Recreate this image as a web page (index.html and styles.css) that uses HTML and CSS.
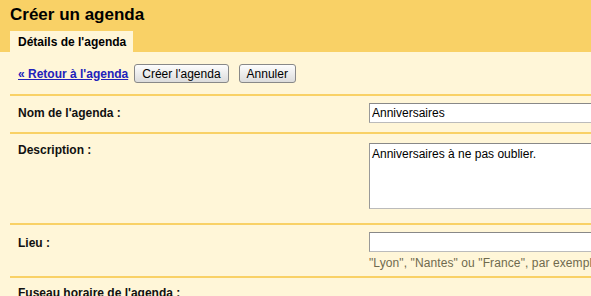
FILE: index.html
```html
<!DOCTYPE html>
<html lang="fr">
<head>
    <meta charset="UTF-8">
    <title>Créer un agenda</title>
    <link rel="stylesheet" href="styles.css">
</head>
<body>
    <div class="entete">
        <h1>Créer un agenda</h1>
        <div class="onglets">
            <span class="onglet">Détails de l'agenda</span>
        </div>
    </div>

    <div class="contenu">
        <div class="actions">
            <a href="#" class="retour">« Retour à l'agenda</a>
            <button class="bouton">Créer l'agenda</button>
            <button class="bouton annuler">Annuler</button>
        </div>

        <table class="formulaire">
            <tr class="ligne-nom">
                <th>Nom de l'agenda :</th>
                <td><input type="text" class="champ" value="Anniversaires"></td>
            </tr>
            <tr class="ligne-desc">
                <th>Description :</th>
                <td><textarea class="champ zone">Anniversaires à ne pas oublier.</textarea></td>
            </tr>
            <tr class="ligne-lieu">
                <th>Lieu :</th>
                <td>
                    <input type="text" class="champ" value="">
                    <div class="aide">"Lyon", "Nantes" ou "France", par exemple</div>
                </td>
            </tr>
            <tr class="ligne-fuseau">
                <th>Fuseau horaire de l'agenda :</th>
                <td></td>
            </tr>
        </table>
    </div>
</body>
</html>
```

FILE: styles.css
```css
body {
    font-family: "Liberation Sans", Arial, sans-serif;
    background-color: #fff6d8;
    margin: 0;
    padding: 0;
    overflow: hidden;
}
.entete {
    background-color: #f9d166;
    padding: 4px 0 0 0;
    height: 48px;
    box-sizing: content-box;
}
h1 {
    font-size: 17px;
    font-weight: bold;
    color: #000;
    margin: 0 0 0 10px;
    line-height: 22px;
}
.onglets {
    margin-top: 5px;
    padding-left: 10px;
    height: 21px;
}
.onglet {
    display: inline-block;
    background-color: #fff6d8;
    font-size: 12px;
    font-weight: bold;
    height: 21px;
    line-height: 22px;
    padding: 0 7px 0 8px;
    white-space: nowrap;
    vertical-align: top;
}
.contenu {
    padding: 0 0 0 10px;
    width: 760px;
}
.actions {
    padding: 12px 0 11px 8px;
    font-size: 12px;
    display: flex;
    align-items: center;
    border-bottom: 2px solid #f9d166;
}
.retour {
    color: #2222bb;
    font-weight: bold;
    margin-right: 6px;
}
.bouton {
    font-family: "Liberation Sans", Arial, sans-serif;
    font-size: 12px;
    height: 19px;
    padding: 0 7px;
    border: 1px solid #888;
    border-radius: 3px;
    background: linear-gradient(#fdfdfd, #dcdcdc);
    color: #000;
}
.annuler {
    margin-left: 10px;
}
.formulaire {
    border-collapse: collapse;
    width: 100%;
}
.formulaire th {
    text-align: left;
    vertical-align: top;
    font-size: 12px;
    font-weight: bold;
    color: #111;
    width: 351px;
    padding: 0 0 0 8px;
}
.formulaire td {
    vertical-align: top;
    padding: 0;
}
.formulaire tr {
    border-bottom: 2px solid #f9d166;
}
.ligne-nom th, .ligne-nom td { padding-top: 7px; padding-bottom: 9px; }
.ligne-nom th { padding-top: 10px; }
.ligne-desc th, .ligne-desc td { padding-top: 9px; padding-bottom: 14px; }
.ligne-desc th { padding-top: 9px; }
.ligne-lieu th, .ligne-lieu td { padding-top: 7px; padding-bottom: 6px; }
.ligne-lieu th { padding-top: 11px; }
.ligne-fuseau th { padding-top: 8px; }
.ligne-fuseau { border-bottom: none; }
.champ {
    display: block;
    box-sizing: border-box;
    width: 380px;
    height: 20px;
    margin: 0;
    border: 1px solid #bbb;
    border-top-color: #888;
    border-left-color: #999;
    background-color: #fff;
    font-family: "Liberation Sans", Arial, sans-serif;
    font-size: 12px;
    padding: 1px 2px;
}
.zone {
    height: 66px;
    resize: none;
    padding: 3px 2px;
}
.aide {
    font-size: 12px;
    color: #6f6a4e;
    margin-top: 4px;
    white-space: nowrap;
    letter-spacing: 0.1px;
}
```
